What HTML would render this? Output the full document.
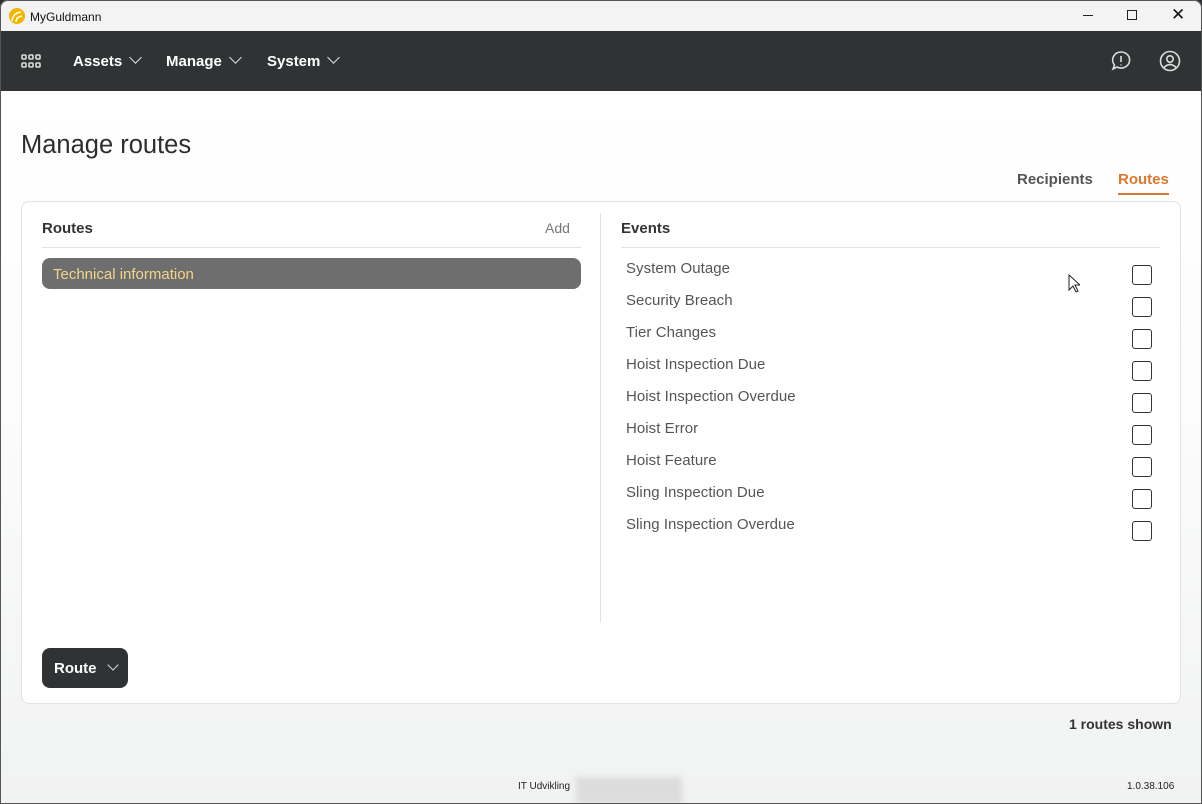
<!DOCTYPE html>
<html><head><style>
*{box-sizing:border-box;margin:0;padding:0}
body{width:1202px;height:804px;overflow:hidden;font-family:"Liberation Sans",sans-serif;background:#2b2f31;position:relative}
.win{position:absolute;left:0;top:0;width:1202px;height:804px;border-radius:8px 8px 0 0;overflow:hidden;background:linear-gradient(#fff 91px,#fcfcfc 400px,#f1f2f2 804px)}
.frame{position:absolute;left:0;top:0;width:1202px;height:804px;border:1px solid #555;border-radius:8px 8px 0 0;pointer-events:none}
.title{height:31px;background:#f3f3f3;position:relative;font-size:12px;color:#111}
.nav{height:60px;background:#2f3334;position:relative;color:#fff}
.nav .it{position:absolute;top:22px;font-weight:bold;font-size:15px}
.chev{display:inline-block;width:9px;height:9px;border-right:1.3px solid #ddd;border-bottom:1.3px solid #ddd;transform:rotate(45deg);margin-left:9px;position:relative;top:-4px}
.card{position:absolute;left:21px;top:201px;width:1160px;height:503px;background:#fff;border:1px solid #e2e2e2;border-radius:8px}
.ev{position:absolute;left:626px;font-size:15px;color:#555;letter-spacing:0.05px}
.cb{position:absolute;left:1132px;width:20px;height:20px;border:1.5px solid #333;border-radius:3px}
</style></head><body><div class="win">
<div class="title">
<svg style="position:absolute;left:9px;top:8px" width="16" height="16" viewBox="0 0 16 16"><circle cx="8" cy="8" r="8" fill="#f4b400"/><path d="M3 13 Q4 5 12 4" stroke="#fff" stroke-width="1.5" fill="none"/><path d="M7 14 Q7 9 13 8" stroke="#fff" stroke-width="1.5" fill="none"/></svg>
<span style="position:absolute;left:30px;top:10px">MyGuldmann</span>
<div style="position:absolute;left:1083px;top:15px;width:10px;border-top:1px solid #222"></div>
<div style="position:absolute;left:1127px;top:10px;width:10px;height:10px;border:1px solid #222"></div>
<span style="position:absolute;left:1171px;top:5px;font-size:17px">✕</span>
</div>
<div class="nav">
<svg style="position:absolute;left:21px;top:23px" width="20" height="14" viewBox="0 0 20 14" fill="none" stroke="#ddd" stroke-width="1.6"><rect x="1" y="1" width="4" height="4" rx="1"/><rect x="8" y="1" width="4" height="4" rx="1"/><rect x="15" y="1" width="4" height="4" rx="1"/><rect x="1" y="9" width="4" height="4" rx="1"/><rect x="8" y="9" width="4" height="4" rx="1"/><rect x="15" y="9" width="4" height="4" rx="1"/></svg>
<span class="it" style="left:73px">Assets<i class="chev"></i></span>
<span class="it" style="left:166px">Manage<i class="chev"></i></span>
<span class="it" style="left:267px">System<i class="chev"></i></span>
<svg style="position:absolute;left:1110px;top:19px" width="22" height="22" viewBox="0 0 22 22" fill="none" stroke="#ddd" stroke-width="1.6"><path d="M11 2a8.5 8 0 1 1-4 15l-4 2 1.5-4A8.5 8 0 0 1 11 2z"/><path d="M11 6v6M11 14.5v1"/></svg>
<svg style="position:absolute;left:1159px;top:19px" width="22" height="22" viewBox="0 0 22 22" fill="none" stroke="#ddd" stroke-width="1.6"><circle cx="11" cy="11" r="9.5"/><circle cx="11" cy="9" r="3.2"/><path d="M5 17.5q6-6 12 0"/></svg>
</div>
<div style="position:absolute;left:21px;top:131px;font-size:25.5px;color:#2d2d2d">Manage routes</div>
<div style="position:absolute;left:1017px;top:171px;font-size:15px;color:#555;font-weight:bold">Recipients</div>
<div style="position:absolute;left:1118px;top:171px;font-size:15px;color:#d9782f;font-weight:bold;border-bottom:2px solid #d9782f;padding-bottom:5px">Routes</div>
<div class="card"></div>
<div style="position:absolute;left:42px;top:220px;font-size:15px;font-weight:bold;color:#333">Routes</div>
<div style="position:absolute;left:545px;top:220px;font-size:14px;color:#777">Add</div>
<div style="position:absolute;left:42px;top:247px;width:539px;border-top:1px solid #e2e2e2"></div>
<div style="position:absolute;left:42px;top:258px;width:539px;height:31px;background:#6e6e6e;border-radius:8px;color:#f3d58a;font-size:15px;padding:8px 11px">Technical information</div>
<div style="position:absolute;left:600px;top:213px;height:410px;border-left:1px solid #e2e2e2"></div>
<div style="position:absolute;left:621px;top:220px;font-size:15px;font-weight:bold;color:#333">Events</div>
<div style="position:absolute;left:621px;top:247px;width:539px;border-top:1px solid #e2e2e2"></div>
<div class="ev" style="top:260px">System Outage</div><div class="cb" style="top:265px"></div>
<div class="ev" style="top:292px">Security Breach</div><div class="cb" style="top:297px"></div>
<div class="ev" style="top:324px">Tier Changes</div><div class="cb" style="top:329px"></div>
<div class="ev" style="top:356px">Hoist Inspection Due</div><div class="cb" style="top:361px"></div>
<div class="ev" style="top:388px">Hoist Inspection Overdue</div><div class="cb" style="top:393px"></div>
<div class="ev" style="top:420px">Hoist Error</div><div class="cb" style="top:425px"></div>
<div class="ev" style="top:452px">Hoist Feature</div><div class="cb" style="top:457px"></div>
<div class="ev" style="top:484px">Sling Inspection Due</div><div class="cb" style="top:489px"></div>
<div class="ev" style="top:516px">Sling Inspection Overdue</div><div class="cb" style="top:521px"></div>
<svg style="position:absolute;left:1068px;top:274px" width="12" height="19" viewBox="0 0 12 19"><path d="M1 1v15l4-4 3 6 2-1-3-6h5z" fill="#fff" stroke="#222"/></svg>
<div style="position:absolute;left:42px;top:648px;width:86px;height:40px;background:#2f3334;border-radius:8px;color:#fff;font-weight:bold;font-size:15px;padding:12px 12px;white-space:nowrap">Route<i class="chev" style="width:8px;height:8px;margin-left:12px"></i></div>
<div style="position:absolute;left:1069px;top:716px;font-size:14px;font-weight:bold;color:#333">1 routes shown</div>
<div style="position:absolute;left:518px;top:781px;font-size:10px;color:#222">IT Udvikling</div>
<div style="position:absolute;left:576px;top:777px;width:106px;height:27px;background:#dcdcdc;filter:blur(3px)"></div>
<div style="position:absolute;left:1127px;top:781px;font-size:10px;color:#222">1.0.38.106</div>
</div><div class="frame"></div></body></html>
